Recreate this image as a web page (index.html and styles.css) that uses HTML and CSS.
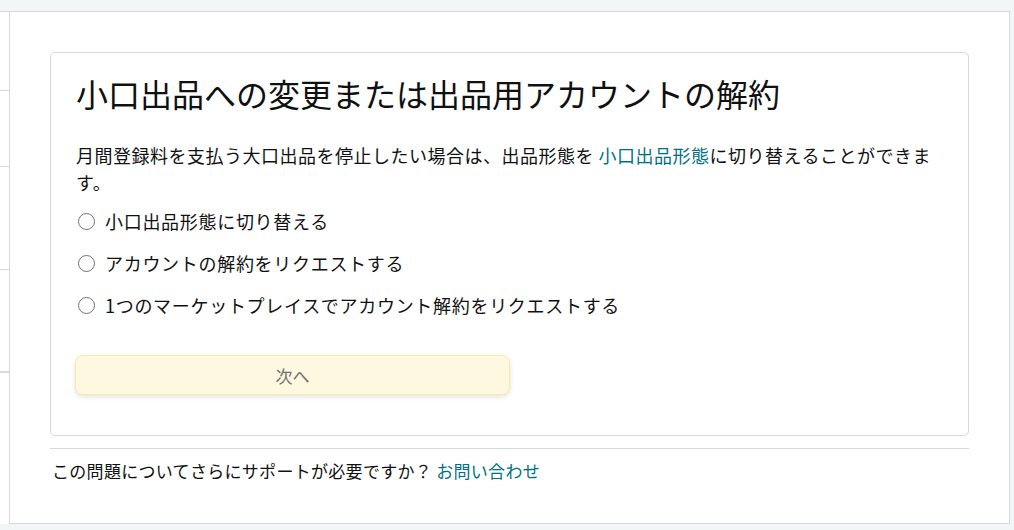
FILE: index.html
```html
<!DOCTYPE html>
<html lang="ja">
<head>
<meta charset="utf-8">
<title>小口出品への変更または出品用アカウントの解約</title>
<link rel="stylesheet" href="styles.css">
</head>
<body>
<div class="frame">
  <div class="side">
    <div class="side-row r1"></div>
    <div class="side-row r2"></div>
    <div class="side-row r3"></div>
    <div class="side-row r4"></div>
  </div>
  <main class="panel">
    <section class="card">
      <h1 class="title">小口出品への変更または出品用アカウントの解約</h1>
      <p class="lead">月間登録料を支払う大口出品を停止したい場合は、出品形態を&nbsp;<a class="link" href="#">小口出品形態</a>に切り替えることができます。</p>
      <div class="options">
        <label class="option"><span class="radio"></span><span>小口出品形態に切り替える</span></label>
        <label class="option"><span class="radio"></span><span>アカウントの解約をリクエストする</span></label>
        <label class="option"><span class="radio"></span><span>1つのマーケットプレイスでアカウント解約をリクエストする</span></label>
      </div>
      <button class="next" type="button">次へ</button>
    </section>
    <div class="help">この問題についてさらにサポートが必要ですか？ <a class="link" href="#">お問い合わせ</a></div>
  </main>
</div>
</body>
</html>
```

FILE: styles.css
```css
html, body {
  margin: 0;
  padding: 0;
}
body {
  background: #f3f6f6;
  font-family: "Noto Sans CJK JP", "Noto Sans", sans-serif;
  color: #0f1111;
  padding-top: 11px;
}
.frame {
  display: flex;
  width: 1010px;
  border-top: 1px solid #d5d9d9;
}
.side {
  width: 9px;
  background: #fff;
  display: flex;
  flex-direction: column;
}
.side-row {
  border-bottom: 1px solid #d5d9d9;
  width: 11px;
}
.r1 { height: 78px; }
.r2 { height: 75px; }
.r3 { height: 102px; }
.r4 { height: 101px; border-bottom-width: 2px; }
.panel {
  flex: 1;
  background: #fff;
  border-left: 1px solid #d5d9d9;
  border-right: 1px solid #d5d9d9;
  border-bottom: 1px solid #d5d9d9;
  padding: 40px 40px 40px 40px;
}
.card {
  border: 1px solid #d5d9d9;
  border-radius: 5px;
  padding: 20px 24px 40px 25px;
}
.title {
  margin: 0;
  font-size: 32px;
  font-weight: 400;
  line-height: 40px;
}
.lead {
  margin: 29px 0 4px 0;
  font-size: 18px;
  letter-spacing: 0.5px;
  line-height: 27px;
}
.link {
  color: #007185;
  text-decoration: none;
}
.options {
  display: flex;
  flex-direction: column;
}
.option {
  display: flex;
  align-items: center;
  gap: 10px;
  height: 42px;
  font-size: 18px;
  letter-spacing: 0.7px;
}
.radio {
  box-sizing: border-box;
  width: 17px;
  height: 17px;
  margin-left: 2px;
  border: 1.5px solid #6f7373;
  border-radius: 50%;
  background: #fff;
  flex: none;
}
.next {
  display: block;
  margin-top: 29px;
  width: 435px;
  height: 40px;
  margin-left: -1px;
  background: #fef8e0;
  border: 1px solid #fce9a6;
  border-radius: 8px;
  box-shadow: 0 2px 5px rgba(15, 17, 17, 0.12);
  font-family: "Noto Sans CJK JP", "Noto Sans", sans-serif;
  font-size: 17px;
  color: #6f7373;
  padding: 0;
}
.help {
  margin-top: 12px;
  border-top: 1px solid #d5d9d9;
  padding: 10px 0 0 2px;
  font-size: 17px;
  letter-spacing: 0.3px;
  line-height: 24px;
  color: #0f1111;
}
```
